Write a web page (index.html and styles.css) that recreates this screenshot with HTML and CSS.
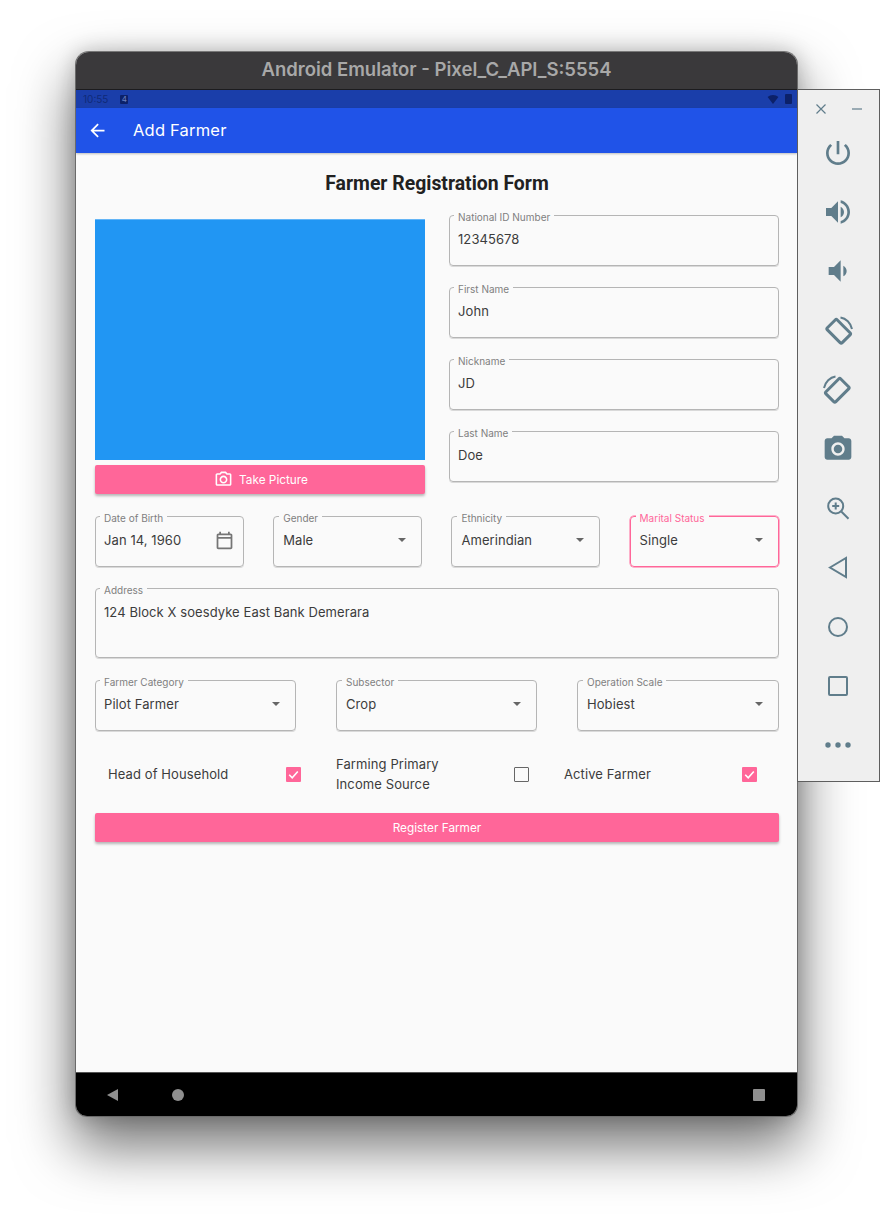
FILE: index.html
```html
<!DOCTYPE html>
<html lang="en">
<head>
<meta charset="utf-8">
<title>Android Emulator - Pixel_C_API_S:5554</title>
<link rel="stylesheet" href="styles.css">
</head>
<body>
<div class="stage">
  <div class="device">
    <div class="titlebar">Android Emulator - Pixel_C_API_S:5554</div>
    <div class="statusbar">
      <div class="status-left">
        <span class="clock">10:55</span>
        <span class="notif">4</span>
      </div>
      <div class="status-right">
        <svg class="wifi" viewBox="0 0 12 10"><path d="M0 2.2C1.6.8 3.7 0 6 0s4.400.8 6 2.200L6 10z"/></svg>
        <span class="battery"></span>
      </div>
    </div>
    <header class="appbar">
      <svg class="back-arrow" viewBox="0 0 24 24"><path d="M20 11H7.830l5.590-5.590L12 4l-8 8 8 8 1.410-1.410L7.830 13H20v-2z"/></svg>
      <span class="appbar-title">Add Farmer</span>
    </header>
    <main class="content">
      <h1 class="form-title">Farmer Registration Form</h1>
      <section class="top-row">
        <div class="photo-col">
          <div class="photo"></div>
          <button class="btn btn-picture">
            <svg class="btn-icon" viewBox="0 0 24 24"><path d="M20 4h-3.170L15 2H9L7.170 4H4c-1.100 0-2 .9-2 2v12c0 1.100.9 2 2 2h16c1.100 0 2-.9 2-2V6c0-1.100-.9-2-2-2zm0 14H4V6h4.050l1.830-2h4.240l1.830 2H20v12zM12 7c-2.760 0-5 2.240-5 5s2.240 5 5 5 5-2.240 5-5-2.240-5-5-5zm0 8c-1.650 0-3-1.350-3-3s1.350-3 3-3 3 1.350 3 3-1.350 3-3 3z"/></svg>
            Take Picture
          </button>
        </div>
        <div class="id-col">
          <div class="field"><label class="field-label">National ID Number</label><span class="field-value">12345678</span></div>
          <div class="field"><label class="field-label">First Name</label><span class="field-value">John</span></div>
          <div class="field"><label class="field-label">Nickname</label><span class="field-value">JD</span></div>
          <div class="field"><label class="field-label">Last Name</label><span class="field-value">Doe</span></div>
        </div>
      </section>
      <section class="row-four">
        <div class="field"><label class="field-label">Date of Birth</label><span class="field-value">Jan 14, 1960</span>
          <svg class="calendar" viewBox="0 0 24 24"><path d="M19 4h-1V2h-2v2H8V2H6v2H5c-1.110 0-1.990.9-1.990 2L3 20c0 1.100.89 2 2 2h14c1.100 0 2-.9 2-2V6c0-1.100-.9-2-2-2zm0 16H5V10h14v10zm0-12H5V6h14v2z"/></svg>
        </div>
        <div class="field"><label class="field-label">Gender</label><span class="field-value">Male</span><i class="caret"></i></div>
        <div class="field"><label class="field-label">Ethnicity</label><span class="field-value">Amerindian</span><i class="caret"></i></div>
        <div class="field field-focus"><label class="field-label">Marital Status</label><span class="field-value">Single</span><i class="caret"></i></div>
      </section>
      <div class="field field-address"><label class="field-label">Address</label><span class="field-value">124 Block X soesdyke East Bank Demerara</span></div>
      <section class="row-three">
        <div class="field"><label class="field-label">Farmer Category</label><span class="field-value">Pilot Farmer</span><i class="caret"></i></div>
        <div class="field"><label class="field-label">Subsector</label><span class="field-value">Crop</span><i class="caret"></i></div>
        <div class="field"><label class="field-label">Operation Scale</label><span class="field-value">Hobiest</span><i class="caret"></i></div>
      </section>
      <section class="checks">
        <div class="check-item"><span class="check-label">Head of Household</span>
          <span class="checkbox checked"><svg viewBox="0 0 14 14"><path d="M3 7.200l2.800 2.800L11 4.200"/></svg></span></div>
        <div class="check-item"><span class="check-label">Farming Primary<br>Income Source</span>
          <span class="checkbox"></span></div>
        <div class="check-item"><span class="check-label">Active Farmer</span>
          <span class="checkbox checked"><svg viewBox="0 0 14 14"><path d="M3 7.200l2.800 2.800L11 4.200"/></svg></span></div>
      </section>
      <button class="btn btn-register">Register Farmer</button>
    </main>
    <nav class="navbar">
      <span class="nav-back"></span>
      <span class="nav-home"></span>
      <span class="nav-recent"></span>
    </nav>
  </div>

  <aside class="toolpanel">
    <div class="window-controls">
      <svg class="win-icon" viewBox="0 0 10 10"><path d="M.5.5l9 9M9.500.5l-9 9"/></svg>
      <svg class="win-icon" viewBox="0 0 10 10"><path d="M0 5h10"/></svg>
    </div>
    <div class="tools">
      <svg class="tool" viewBox="0 0 24 24"><path d="M13 3h-2v10h2V3zm4.830 2.170l-1.420 1.420C17.990 7.860 19 9.810 19 12c0 3.870-3.130 7-7 7s-7-3.130-7-7c0-2.190 1.010-4.140 2.580-5.420L6.170 5.170C4.230 6.820 3 9.260 3 12c0 4.970 4.030 9 9 9s9-4.030 9-9c0-2.740-1.230-5.180-3.170-6.830z"/></svg>
      <svg class="tool" viewBox="0 0 24 24"><path d="M3 9v6h4l5 5V4L7 9H3zm13.500 3c0-1.770-1.020-3.290-2.500-4.030v8.050c1.480-.73 2.500-2.250 2.500-4.020zM14 3.230v2.060c2.890.86 5 3.540 5 6.710s-2.110 5.850-5 6.710v2.060c4.010-.91 7-4.490 7-8.770s-2.990-7.860-7-8.770z"/></svg>
      <svg class="tool" viewBox="0 0 24 24"><path d="M18.500 12c0-1.770-1.020-3.290-2.500-4.030v8.050c1.480-.73 2.500-2.250 2.500-4.020zM5 9v6h4l5 5V4L9 9H5z"/></svg>
      <svg class="tool" viewBox="0 0 32 32"><rect class="outline thick" x="5.500" y="9" width="21" height="14" rx="1.500" transform="rotate(45 16 17)"/><path class="outline" d="M18.500 2.500c5.500.8 10.200 5.500 11.500 11.500"/></svg>
      <svg class="tool" viewBox="0 0 32 32"><rect class="outline thick" x="5.500" y="9" width="21" height="14" rx="1.500" transform="rotate(-45 16 17)"/><path class="outline" d="M13.500 2.500c-5.500.8-10.200 5.500-11.500 11.500"/></svg>
      <svg class="tool" viewBox="0 0 24 24"><circle cx="12" cy="12" r="3.200"/><path d="M9 2L7.170 4H4c-1.100 0-2 .9-2 2v12c0 1.100.9 2 2 2h16c1.100 0 2-.9 2-2V6c0-1.100-.9-2-2-2h-3.170L15 2H9zm3 15c-2.760 0-5-2.240-5-5s2.240-5 5-5 5 2.240 5 5-2.240 5-5 5z"/></svg>
      <svg class="tool" viewBox="0 0 32 32"><circle class="outline" cx="13.700" cy="14" r="7.500"/><path class="outline" d="M19.500 19.800l7 7M13.700 10.500v7M10.200 14h7"/></svg>
      <svg class="tool" viewBox="0 0 32 32"><path class="outline" d="M8 16.500L24 7v19z"/></svg>
      <svg class="tool" viewBox="0 0 32 32"><circle class="outline" cx="16" cy="16" r="9"/></svg>
      <svg class="tool" viewBox="0 0 32 32"><rect class="outline" x="7" y="7" width="18" height="18" rx="1"/></svg>
      <svg class="tool" viewBox="0 0 32 32"><circle cx="6" cy="16" r="2.700"/><circle cx="16" cy="16" r="2.700"/><circle cx="26" cy="16" r="2.700"/></svg>
    </div>
  </aside>
</div>
</body>
</html>
```
FILE: styles.css
```css
* { box-sizing: border-box; }

html, body {
  margin: 0;
  height: 100%;
  background: #fff;
  overflow: hidden;
}

.stage {
  position: relative;
  width: 880px;
  height: 1216px;
  padding: 51px 0 0 75px;
  font-family: Inter, "Noto Sans", sans-serif;
  overflow: hidden;
}

.device {
  width: 723px;
  height: 1066px;
  display: flex;
  flex-direction: column;
  border: 1px solid #6a6a6a;
  border-top-color: #777;
  border-radius: 14px 14px 12px 12px;
  overflow: hidden;
  background: #fafafa;
  box-shadow: 0 28px 56px 2px rgba(0, 0, 0, .55), 0 0 20px rgba(0, 0, 0, .2);
}

.titlebar {
  flex: 0 0 38px;
  display: flex;
  align-items: center;
  justify-content: center;
  padding-bottom: 3px;
  background: #3a393b;
  color: #a8a8a8;
  font-size: 18.500px;
  font-weight: 600;
  border-bottom: 1px solid #1c1c1e;
}

.statusbar {
  flex: 0 0 18px;
  display: flex;
  align-items: center;
  justify-content: space-between;
  padding: 0 5px 0 7px;
  background: #1a3eaa;
}

.status-left { display: flex; align-items: center; gap: 12px; }
.clock { font-size: 10px; color: #102a78; }
.notif {
  width: 8px;
  height: 9px;
  background: #0c2169;
  color: #6d83c2;
  font-size: 8px;
  line-height: 9px;
  text-align: center;
  border-radius: 1px;
}
.status-right { display: flex; align-items: center; gap: 6px; }
.wifi { width: 12px; height: 9px; fill: #0c2169; }
.battery { width: 7px; height: 10px; background: #0c2169; border-radius: 1px; }

.appbar {
  flex: 0 0 45px;
  display: flex;
  align-items: center;
  padding: 0 0 1px 11px;
  background: #2053e8;
  box-shadow: 0 1px 2px rgba(0, 0, 0, .25);
  position: relative;
  color: #fff;
}
.back-arrow { width: 21px; height: 21px; fill: #fff; }
.appbar-title { margin-left: 25px; font-size: 16.500px; letter-spacing: .2px; }

.content {
  flex: 1;
  padding: 0 18px 0 19px;
  display: flex;
  flex-direction: column;
  color: #3c3c3c;
}

.form-title {
  margin: 20px 0 0;
  height: 22px;
  line-height: 22px;
  text-align: center;
  font-family: Roboto, sans-serif;
  font-size: 19.400px;
  font-weight: 700;
  color: #212121;
}

.top-row {
  display: grid;
  grid-template-columns: 330px 330px;
  column-gap: 24px;
  margin-top: 20px;
}

.photo-col { display: flex; flex-direction: column; padding-top: 4px; }
.photo { height: 241px; background: #2196f3; border-top: 1px solid #64b5f6; }

.btn {
  display: flex;
  align-items: center;
  justify-content: center;
  gap: 6px;
  border: 0;
  border-radius: 2px;
  background: #ff6699;
  color: #fff;
  font-family: inherit;
  font-size: 11.800px;
  box-shadow: 0 2px 3px rgba(0, 0, 0, .28);
}
.btn-picture { height: 29px; margin-top: 5px; padding-right: 4px; }
.btn-icon { width: 19px; height: 19px; fill: #fff; }
.btn-register { height: 29px; margin-top: 19px; }

.id-col { display: flex; flex-direction: column; gap: 21px; }

.field {
  position: relative;
  height: 51px;
  padding: 15px 8px 0;
  border: 1px solid #b5b5b5;
  border-radius: 4px;
  box-shadow: 0 1px 0 #d9d9d9;
}

.field-label {
  position: absolute;
  top: -5px;
  left: 4px;
  padding: 0 4px;
  background: #fafafa;
  font-size: 10px;
  line-height: 12px;
  color: #7f7f7f;
}

.field-value {
  display: block;
  font-size: 13px;
  line-height: 16px;
  letter-spacing: .08px;
  color: #3c3c3c;
}

.row-four .field + .field,
.row-three .field + .field { padding-left: 9px; }
.row-four .field + .field .field-label,
.row-three .field + .field .field-label { left: 5px; }

.field-focus { border-color: #ff6699; box-shadow: 0 0 0 .5px #ff6699; }
.field-focus .field-label { color: #ff6699; }

.caret {
  position: absolute;
  top: 21px;
  right: 15px;
  width: 0;
  height: 0;
  border-left: 4px solid transparent;
  border-right: 4px solid transparent;
  border-top: 4px solid #666;
}

.calendar {
  position: absolute;
  top: 13px;
  right: 8px;
  width: 21px;
  height: 21px;
  fill: #757575;
}

.row-four {
  display: grid;
  grid-template-columns: 149px 149px 149px 149px;
  column-gap: 29.200px;
  margin-top: 22px;
}

.field-address { height: 70px; margin-top: 21px; }

.row-three {
  display: grid;
  grid-template-columns: 201px 201px 202px;
  justify-content: space-between;
  margin-top: 22px;
}

.checks {
  display: grid;
  grid-template-columns: repeat(3, 228px);
  margin-top: 23px;
}

.check-item {
  display: flex;
  align-items: center;
  justify-content: space-between;
  height: 40px;
  padding: 0 22px 0 13px;
}

.check-label { font-size: 13px; line-height: 20px; letter-spacing: .1px; color: #3c3c3c; }

.checkbox {
  flex: none;
  display: block;
  width: 15px;
  height: 15px;
  border: 1.500px solid #666;
  border-radius: 1px;
}
.checkbox.checked { background: #ff6699; border: 0; }
.checkbox svg { display: block; width: 15px; height: 15px; fill: none; stroke: #fff; stroke-width: 1.500; }

.navbar {
  flex: 0 0 44px;
  display: flex;
  align-items: center;
  padding: 0 32px 0 31px;
  background: #000;
  border-top: 1px solid #555;
}
.nav-back {
  width: 0;
  height: 0;
  border-top: 6.500px solid transparent;
  border-bottom: 6.500px solid transparent;
  border-right: 11px solid #8f8f8f;
}
.nav-home {
  width: 12px;
  height: 12px;
  margin-left: 54px;
  border-radius: 50%;
  background: #8f8f8f;
}
.nav-recent {
  width: 12px;
  height: 12px;
  margin-left: auto;
  border-radius: 1px;
  background: #8f8f8f;
}

.toolpanel {
  position: absolute;
  top: 89px;
  left: 798px;
  width: 82px;
  height: 693px;
  padding-top: 14px;
  background: #efefef;
  border: 1px solid #5e5e5e;
  border-left-width: 0;
  box-shadow: -1px 0 0 #5e5e5e;
  display: flex;
  flex-direction: column;
  align-items: center;
}

.window-controls {
  width: 100%;
  display: flex;
  justify-content: space-between;
  padding: 0 17px 0 18px;
}
.win-icon { width: 10px; height: 10px; fill: none; stroke: #607d8b; stroke-width: 1.200; }

.tools {
  display: flex;
  flex-direction: column;
  gap: 27.200px;
  margin-top: 23px;
  margin-left: -1px;
}
.tool { display: block; width: 32px; height: 32px; fill: #607d8b; }
.tool .outline { fill: none; stroke: #607d8b; stroke-width: 2; }
.tool .thick { stroke-width: 3; }
```
